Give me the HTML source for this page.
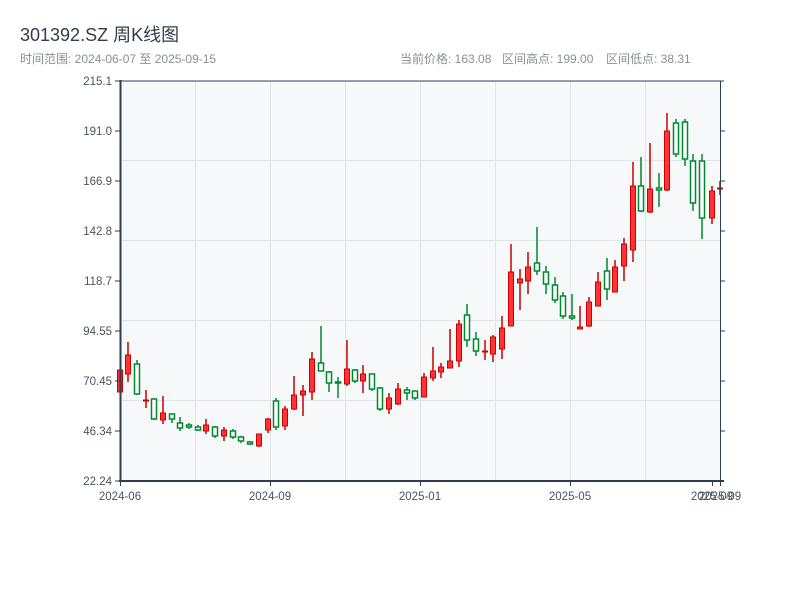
<!DOCTYPE html>
<html><head><meta charset="utf-8"><style>
html,body{margin:0;padding:0;background:#fff;width:800px;height:600px;overflow:hidden}
svg{display:block}
text{font-family:"Liberation Sans","Noto Sans CJK SC",sans-serif}
</style></head><body>
<svg width="800" height="600" xmlns="http://www.w3.org/2000/svg">
<text x="20" y="41" font-size="18" fill="#333d4a">301392.SZ 周K线图</text>
<text x="20" y="63" font-size="12" fill="#8a8f96">时间范围: 2024-06-07 至 2025-09-15</text>
<text x="400" y="63" font-size="12" fill="#8a8f96">当前价格: 163.08</text>
<text x="502" y="63" font-size="12" fill="#8a8f96">区间高点: 199.00</text>
<text x="606" y="63" font-size="12" fill="#8a8f96">区间低点: 38.31</text>
<rect x="120" y="81" width="600" height="400" fill="#f6f8fa"/>
<g stroke="#e1e4e8" stroke-width="1">
<line x1="120" y1="160.5" x2="720" y2="160.5"/><line x1="120" y1="240.5" x2="720" y2="240.5"/>
<line x1="120" y1="320.5" x2="720" y2="320.5"/><line x1="120" y1="400.5" x2="720" y2="400.5"/>
<line x1="195.5" y1="81" x2="195.5" y2="481"/><line x1="270.5" y1="81" x2="270.5" y2="481"/>
<line x1="345.5" y1="81" x2="345.5" y2="481"/><line x1="420.5" y1="81" x2="420.5" y2="481"/>
<line x1="495.5" y1="81" x2="495.5" y2="481"/><line x1="570.5" y1="81" x2="570.5" y2="481"/>
<line x1="645.5" y1="81" x2="645.5" y2="481"/>
</g>
<g stroke="#cc0000" stroke-width="1.5" fill="none">
<path d="M120 370V392M128 342V382M146 390V408M163 396V424M206 419V434M224 427V441M259 434V447M268 418V433M285 406V430M294 376V410M303 385V416M312 352V400M347 340V386M363 365V393M389 393V414M398 383V405M424 373V397M433 347V381M441 363V378M450 329V368M459 320V367M485 340V360M493 335V362M502 316V359M511 244V326M520 269V310M528 252V294M580 306V329M589 297V327M598 272V306M615 260V292M624 238V281M633 162V262M650 143V213M667 113V191M712 186V224M720 181V195"/>
</g>
<g stroke="#cc0000" stroke-width="1" fill="#ff3333">
<rect x="117.5" y="370" width="5" height="22"/><rect x="125.5" y="355" width="5" height="19"/>
<rect x="143.5" y="400" width="5" height="1"/><rect x="160.5" y="413" width="5" height="7"/>
<rect x="203.5" y="425" width="5" height="6"/><rect x="221.5" y="430" width="5" height="6"/>
<rect x="256.5" y="434" width="5" height="12"/><rect x="265.5" y="419" width="5" height="11"/>
<rect x="282.5" y="409" width="5" height="17"/><rect x="291.5" y="395" width="5" height="14"/>
<rect x="300.5" y="391" width="5" height="4"/><rect x="309.5" y="359" width="5" height="33"/>
<rect x="344.5" y="369" width="5" height="15"/><rect x="360.5" y="374" width="5" height="7"/>
<rect x="386.5" y="398" width="5" height="11"/><rect x="395.5" y="389" width="5" height="15"/>
<rect x="421.5" y="377" width="5" height="20"/><rect x="430.5" y="371" width="5" height="7"/>
<rect x="438.5" y="367" width="5" height="5"/><rect x="447.5" y="361" width="5" height="7"/>
<rect x="456.5" y="324" width="5" height="37"/><rect x="482.5" y="351" width="5" height="1"/>
<rect x="490.5" y="337" width="5" height="17"/><rect x="499.5" y="328" width="5" height="21"/>
<rect x="508.5" y="272" width="5" height="54"/><rect x="517.5" y="279" width="5" height="4"/>
<rect x="525.5" y="267" width="5" height="14"/><rect x="577.5" y="327" width="5" height="2"/>
<rect x="586.5" y="302" width="5" height="24"/><rect x="595.5" y="282" width="5" height="24"/>
<rect x="612.5" y="267" width="5" height="25"/><rect x="621.5" y="244" width="5" height="22"/>
<rect x="630.5" y="186" width="5" height="64"/><rect x="647.5" y="189" width="5" height="23"/>
<rect x="664.5" y="131" width="5" height="59"/><rect x="709.5" y="191" width="5" height="27"/>
<rect x="717.5" y="188" width="5" height="1"/>
</g>
<g stroke="#00882e" stroke-width="1.5" fill="none">
<path d="M137 360V395M154 398V420M172 414V423M180 417V431M189 423V429M198 425V431M215 426V438M233 429V439M241 436V443M250 441V445M276 398V430M321 326V371M329 371V392M338 377V398M355 369V383M372 374V391M380 387V411M407 387V400M415 391V400M467 304V347M476 332V356M537 227V275M546 266V294M555 277V303M563 292V319M572 294V320M607 258V300M641 157V212M659 173V207M676 119V157M685 119V166M693 154V211M702 154V239"/>
</g>
<g stroke="#00882e" stroke-width="1.5" fill="#ffffff">
<rect x="134.5" y="364" width="5" height="30"/><rect x="151.5" y="399" width="5" height="20"/>
<rect x="169.5" y="414" width="5" height="5"/><rect x="177.5" y="423" width="5" height="5"/>
<rect x="186.5" y="425" width="5" height="2"/><rect x="195.5" y="427" width="5" height="3"/>
<rect x="212.5" y="427" width="5" height="9"/><rect x="230.5" y="431" width="5" height="6"/>
<rect x="238.5" y="437" width="5" height="4"/><rect x="247.5" y="442" width="5" height="2"/>
<rect x="273.5" y="401" width="5" height="26"/><rect x="318.5" y="363" width="5" height="8"/>
<rect x="326.5" y="372" width="5" height="11"/><rect x="335.5" y="382" width="5" height="1"/>
<rect x="352.5" y="370" width="5" height="11"/><rect x="369.5" y="374" width="5" height="15"/>
<rect x="377.5" y="388" width="5" height="21"/><rect x="404.5" y="390" width="5" height="3"/>
<rect x="412.5" y="391" width="5" height="7"/><rect x="464.5" y="315" width="5" height="25"/>
<rect x="473.5" y="339" width="5" height="12"/><rect x="534.5" y="263" width="5" height="8"/>
<rect x="543.5" y="272" width="5" height="12"/><rect x="552.5" y="285" width="5" height="15"/>
<rect x="560.5" y="296" width="5" height="20"/><rect x="569.5" y="316" width="5" height="2"/>
<rect x="604.5" y="271" width="5" height="18"/><rect x="638.5" y="186" width="5" height="25"/>
<rect x="656.5" y="188" width="5" height="2"/><rect x="673.5" y="123" width="5" height="31"/>
<rect x="682.5" y="122" width="5" height="37"/><rect x="690.5" y="161" width="5" height="42"/>
<rect x="699.5" y="161" width="5" height="57"/>
</g>
<g stroke="#2c3e50" fill="none">
<line x1="120.5" y1="80" x2="120.5" y2="482" stroke-width="2"/>
<line x1="119" y1="481" x2="724" y2="481" stroke-width="2"/>
<line x1="120" y1="81" x2="724" y2="81" stroke-width="1"/>
<line x1="720.5" y1="81" x2="720.5" y2="481" stroke-width="1"/>
<g stroke-width="1">
<line x1="115" y1="81" x2="120" y2="81"/><line x1="115" y1="131" x2="120" y2="131"/><line x1="115" y1="181" x2="120" y2="181"/>
<line x1="115" y1="231" x2="120" y2="231"/><line x1="115" y1="281" x2="120" y2="281"/><line x1="115" y1="331" x2="120" y2="331"/>
<line x1="115" y1="381" x2="120" y2="381"/><line x1="115" y1="431" x2="120" y2="431"/><line x1="115" y1="481" x2="120" y2="481"/>
<line x1="720" y1="131" x2="725" y2="131"/><line x1="720" y1="181" x2="725" y2="181"/><line x1="720" y1="231" x2="725" y2="231"/>
<line x1="720" y1="281" x2="725" y2="281"/><line x1="720" y1="331" x2="725" y2="331"/><line x1="720" y1="381" x2="725" y2="381"/>
<line x1="720" y1="431" x2="725" y2="431"/>
<line x1="120.5" y1="481" x2="120.5" y2="486"/><line x1="270.5" y1="481" x2="270.5" y2="486"/><line x1="420.5" y1="481" x2="420.5" y2="486"/>
<line x1="570.5" y1="481" x2="570.5" y2="486"/><line x1="712.5" y1="481" x2="712.5" y2="486"/><line x1="720.5" y1="481" x2="720.5" y2="486"/>
</g></g>
<g font-size="11.5" fill="#4a5360" text-anchor="end">
<text x="112" y="85">215.1</text><text x="112" y="135">191.0</text><text x="112" y="185">166.9</text>
<text x="112" y="235">142.8</text><text x="112" y="285">118.7</text><text x="112" y="335">94.55</text>
<text x="112" y="385">70.45</text><text x="112" y="435">46.34</text><text x="112" y="485">22.24</text>
</g>
<g font-size="11.5" fill="#4a5360" text-anchor="middle">
<text x="120" y="500">2024-06</text><text x="270" y="500">2024-09</text><text x="420" y="500">2025-01</text>
<text x="570" y="500">2025-05</text><text x="712" y="500">2025-09</text><text x="720" y="500">2025-09</text>
</g>
</svg>
</body></html>
